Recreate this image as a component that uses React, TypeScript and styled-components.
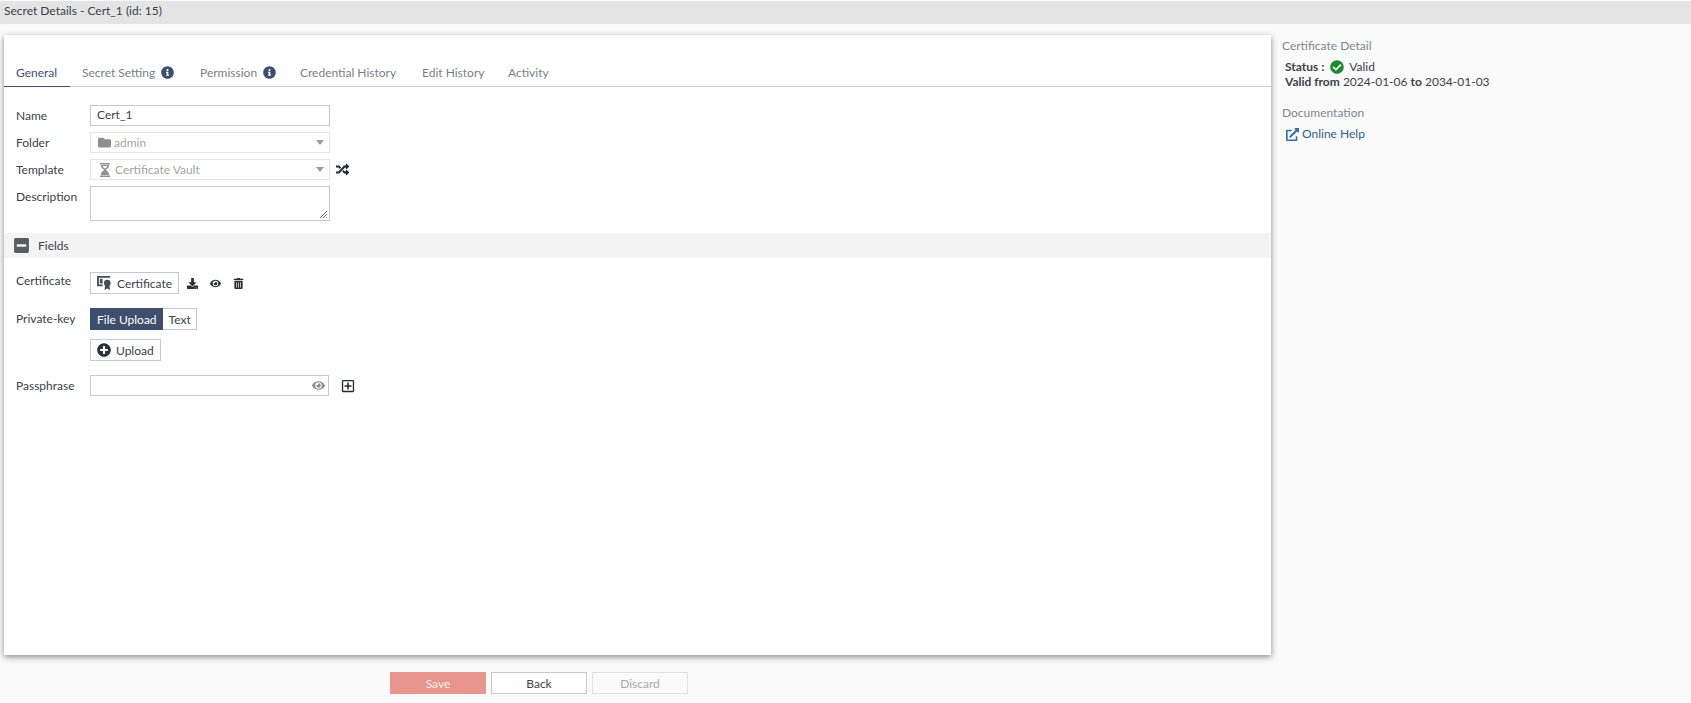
import React from 'react';
import styled, { createGlobalStyle } from 'styled-components';
import {
  FaCheckCircle, FaDownload, FaEye, FaFolder, FaInfoCircle, FaMinusSquare,
  FaPlusCircle, FaRandom, FaRegPlusSquare, FaTrashAlt, FaExternalLinkAlt,
} from 'react-icons/fa';

const Global = createGlobalStyle`
  html, body { margin: 0; padding: 0; height: 100%; background: #fafafa; }
  body { font-family: Lato, "Liberation Sans", sans-serif; font-size: 12px; color: #3a3f4a; overflow: hidden; }
  * { box-sizing: border-box; }
`;
const Page = styled.div`
  width: 1691px; height: 703px; padding-top: 1px; background: #fafafa; display: flex; flex-direction: column;
`;
const TitleBar = styled.div`
  height: 23px; background: #e4e4e4; padding-left: 4px; line-height: 19px; font-size: 12px; color: #3c4048; flex: none;
`;
const Main = styled.div`
  flex: 1; display: flex; min-height: 0;
`;
const LeftColumn = styled.div`
  width: 1271px; padding: 11px 0 0 4px; display: flex; flex-direction: column; flex: none;
`;
const Card = styled.div`
  height: 620px; background: #fff; box-shadow: 0 2px 6px rgba(0,0,0,.45); flex: none;
`;
const Tabs = styled.div`
  height: 52px; border-bottom: 1px solid #cfcfcf; display: flex; align-items: flex-end;
`;
const Tab = styled.div<{ $active?: boolean; $w: number }>`
  width: ${p => p.$w}px; height: 28px; display: flex; align-items: center; gap: 6px; flex: none;
  padding-left: 12px; margin-bottom: -1px; font-size: 12px; white-space: nowrap;
  color: ${p => (p.$active ? '#3e4f6d' : '#7a7f88')};
  border-bottom: ${p => (p.$active ? '1px solid #3e4f6d' : '1px solid transparent')};
  svg { color: #3e4f6d; font-size: 13px; }
`;
const Form = styled.div`
  padding: 18px 0 0 0; display: flex; flex-direction: column;
`;
const Row = styled.div<{ $h: number; $gap?: number }>`
  display: flex; align-items: flex-start; height: ${p => p.$h}px; margin-bottom: ${p => p.$gap ?? 0}px; padding-left: 12px;
`;
const Label = styled.div<{ $top?: number }>`
  width: 74px; flex: none; font-size: 12px; color: #3c4048; padding-top: ${p => p.$top ?? 3}px; line-height: 16px;
`;
const Input = styled.div`
  width: 240px; height: 21px; border: 1px solid #c8c8c8; background: #fff; padding-left: 6px; line-height: 18px; font-size: 12px; color: #3c4048;
`;
const SelectBox = styled.div`
  width: 240px; height: 21px; border: 1px solid #e4e4e4; background: #fff; padding: 0 5px 0 7px; display: flex; align-items: center; gap: 3px;
  color: #a5a5a5; font-size: 12px;
  svg { color: #8f8f8f; font-size: 13px; }
`;
const Caret = styled.span`
  margin-left: auto; width: 0; height: 0; border-left: 4.5px solid transparent; border-right: 4.5px solid transparent; border-top: 5px solid #9a9a9a;
`;
const SideIcon = styled.span<{ $gap?: number; $size?: number }>`
  margin-left: ${p => p.$gap ?? 6}px; display: inline-flex; height: 21px; align-items: center; color: #23272e; font-size: ${p => p.$size ?? 13}px;
`;
const Area = styled.div`
  position: relative; width: 240px; height: 35px; border: 1px solid #c8c8c8; background: #fff;
`;
const Grip = styled.svg`
  position: absolute; right: 1px; bottom: 1px; width: 9px; height: 9px;
`;
const SectionBar = styled.div`
  height: 25px; margin-top: 12px; background: #f4f4f4; display: flex; align-items: center; padding-left: 9px; gap: 8px; color: #3c4048; font-size: 12px;
  svg { font-size: 17px; color: #5a5c60; }
`;
const Fields = styled.div`
  padding-top: 14px; display: flex; flex-direction: column;
`;
const Btn = styled.div`
  height: 22px; border: 1px solid #c8c8c8; background: #fff; display: inline-flex; align-items: center; padding: 0 6px; gap: 5px; color: #3c4048; font-size: 12px;
`;
const Actions = styled.div`
  display: flex; align-items: center; height: 22px; margin-left: 8px; gap: 12px; color: #2b2e35; font-size: 11px;
`;
const Toggle = styled.div`
  display: flex; height: 22px;
`;
const ToggleItem = styled.div<{ $on?: boolean }>`
  height: 22px; padding: 0 5px 0 6px; display: flex; align-items: center; font-size: 12px;
  background: ${p => (p.$on ? '#3e4f6d' : '#fff')}; color: ${p => (p.$on ? '#fff' : '#3c4048')};
  border: 1px solid ${p => (p.$on ? '#3e4f6d' : '#c8c8c8')}; ${p => (p.$on ? '' : 'border-left: 0;')}
`;
const Pass = styled.div`
  width: 239px; height: 21px; border: 1px solid #c8c8c8; background: #fff; display: flex; align-items: center; justify-content: flex-end; padding-right: 3px; color: #8c8c8c; font-size: 13px;
`;
const Footer = styled.div`
  margin-top: 17px; margin-left: 386px; display: flex; gap: 5px;
`;
const FootBtn = styled.div<{ $kind: 'save' | 'back' | 'discard' }>`
  width: 96px; height: 22px; display: flex; align-items: center; justify-content: center; font-size: 12px;
  background: ${p => (p.$kind === 'save' ? '#e8958e' : p.$kind === 'back' ? '#fff' : '#fafafa')};
  color: ${p => (p.$kind === 'save' ? '#fbeeed' : p.$kind === 'back' ? '#3c4048' : '#a8a8a8')};
  border: 1px solid ${p => (p.$kind === 'save' ? '#e8958e' : p.$kind === 'back' ? '#c8c8c8' : '#e2e2e2')};
`;
const Side = styled.div`
  padding: 14px 0 0 11px; font-size: 12px; color: #3c4048;
`;
const SideTitle = styled.div`
  color: #7f8590; line-height: 16px; margin-bottom: 5px;
`;
const SideBody = styled.div`
  padding-left: 3px; line-height: 15px; margin-bottom: 16px;
`;
const StatusLine = styled.div`
  display: flex; align-items: center; gap: 5px;
  b { margin-right: 1px; }
  svg { color: #1c8a2e; font-size: 14px; }
`;
const HelpLink = styled.div`
  padding-left: 4px; display: flex; align-items: center; gap: 3px; color: #2f5f8f; line-height: 16px;
  svg { font-size: 13px; color: #2f6fa8; }
`;

const CertIcon = () => (
  <svg width="15" height="14" viewBox="0 0 16 15" fill="#4a4c50">
    <path d="M0 0h14v2H2v7h4v2H0z" />
    <rect x="3" y="3" width="3" height="5" />
    <circle cx="11" cy="7.500" r="3.600" />
    <path d="M8.700 10.200 8 15l3-1.700 3 1.700-.7-4.800z" />
  </svg>
);

const HourglassIcon = () => (
  <svg width="14" height="14" viewBox="0 0 14 14" fill="#8f8f8f">
    <path d="M2 0h10v1.500H2zM2 12.500h10V14H2z" />
    <path d="M3 2h8v1c0 1.800-2.200 3-3.200 4 1 1 3.200 2.200 3.200 4v1H3v-1c0-1.800 2.200-3 3.200-4C5.200 6 3 4.800 3 3zM4.600 3c.3.900 1.500 1.900 2.400 2.800.9-.9 2.100-1.900 2.400-2.800z" fillRule="evenodd" />
  </svg>
);

export default function App() {
  return (
    <Page>
      <Global />
      <TitleBar>Secret Details - Cert_1 (id: 15)</TitleBar>
      <Main>
        <LeftColumn>
          <Card>
            <Tabs>
              <Tab $active $w={66}>General</Tab>
              <Tab $w={118}>Secret Setting <FaInfoCircle /></Tab>
              <Tab $w={100}>Permission <FaInfoCircle /></Tab>
              <Tab $w={122}>Credential History</Tab>
              <Tab $w={86}>Edit History</Tab>
              <Tab $w={70}>Activity</Tab>
            </Tabs>
            <Form>
              <Row $h={21} $gap={6}><Label>Name</Label><Input>Cert_1</Input></Row>
              <Row $h={21} $gap={6}><Label>Folder</Label><SelectBox><FaFolder />admin<Caret /></SelectBox></Row>
              <Row $h={21} $gap={6}><Label>Template</Label><SelectBox><HourglassIcon />Certificate Vault<Caret /></SelectBox><SideIcon><FaRandom /></SideIcon></Row>
              <Row $h={35}><Label $top={3}>Description</Label><Area><Grip viewBox="0 0 9 9"><path d="M8 1 1 8M8 4 4 8M8 7 7 8" stroke="#666" strokeWidth="1" /></Grip></Area></Row>
              <SectionBar><FaMinusSquare />Fields</SectionBar>
              <Fields>
                <Row $h={22} $gap={14}>
                  <Label $top={1}>Certificate</Label>
                  <Btn><CertIcon />Certificate</Btn>
                  <Actions><FaDownload /><FaEye /><FaTrashAlt /></Actions>
                </Row>
                <Row $h={22} $gap={9}>
                  <Label>Private-key</Label>
                  <Toggle><ToggleItem $on>File Upload</ToggleItem><ToggleItem>Text</ToggleItem></Toggle>
                </Row>
                <Row $h={21} $gap={15}>
                  <Label />
                  <Btn><FaPlusCircle size={14} color="#2b2e35" />Upload</Btn>
                </Row>
                <Row $h={21}>
                  <Label>Passphrase</Label>
                  <Pass><FaEye /></Pass>
                  <SideIcon $gap={12} $size={14}><FaRegPlusSquare /></SideIcon>
                </Row>
              </Fields>
            </Form>
          </Card>
          <Footer>
            <FootBtn $kind="save">Save</FootBtn>
            <FootBtn $kind="back">Back</FootBtn>
            <FootBtn $kind="discard">Discard</FootBtn>
          </Footer>
        </LeftColumn>
        <Side>
          <SideTitle>Certificate Detail</SideTitle>
          <SideBody>
            <StatusLine><b>Status :</b><FaCheckCircle />Valid</StatusLine>
            <div><b>Valid from</b> 2024-01-06 <b>to</b> 2034-01-03</div>
          </SideBody>
          <SideTitle>Documentation</SideTitle>
          <HelpLink><FaExternalLinkAlt />Online Help</HelpLink>
        </Side>
      </Main>
    </Page>
  );
}
